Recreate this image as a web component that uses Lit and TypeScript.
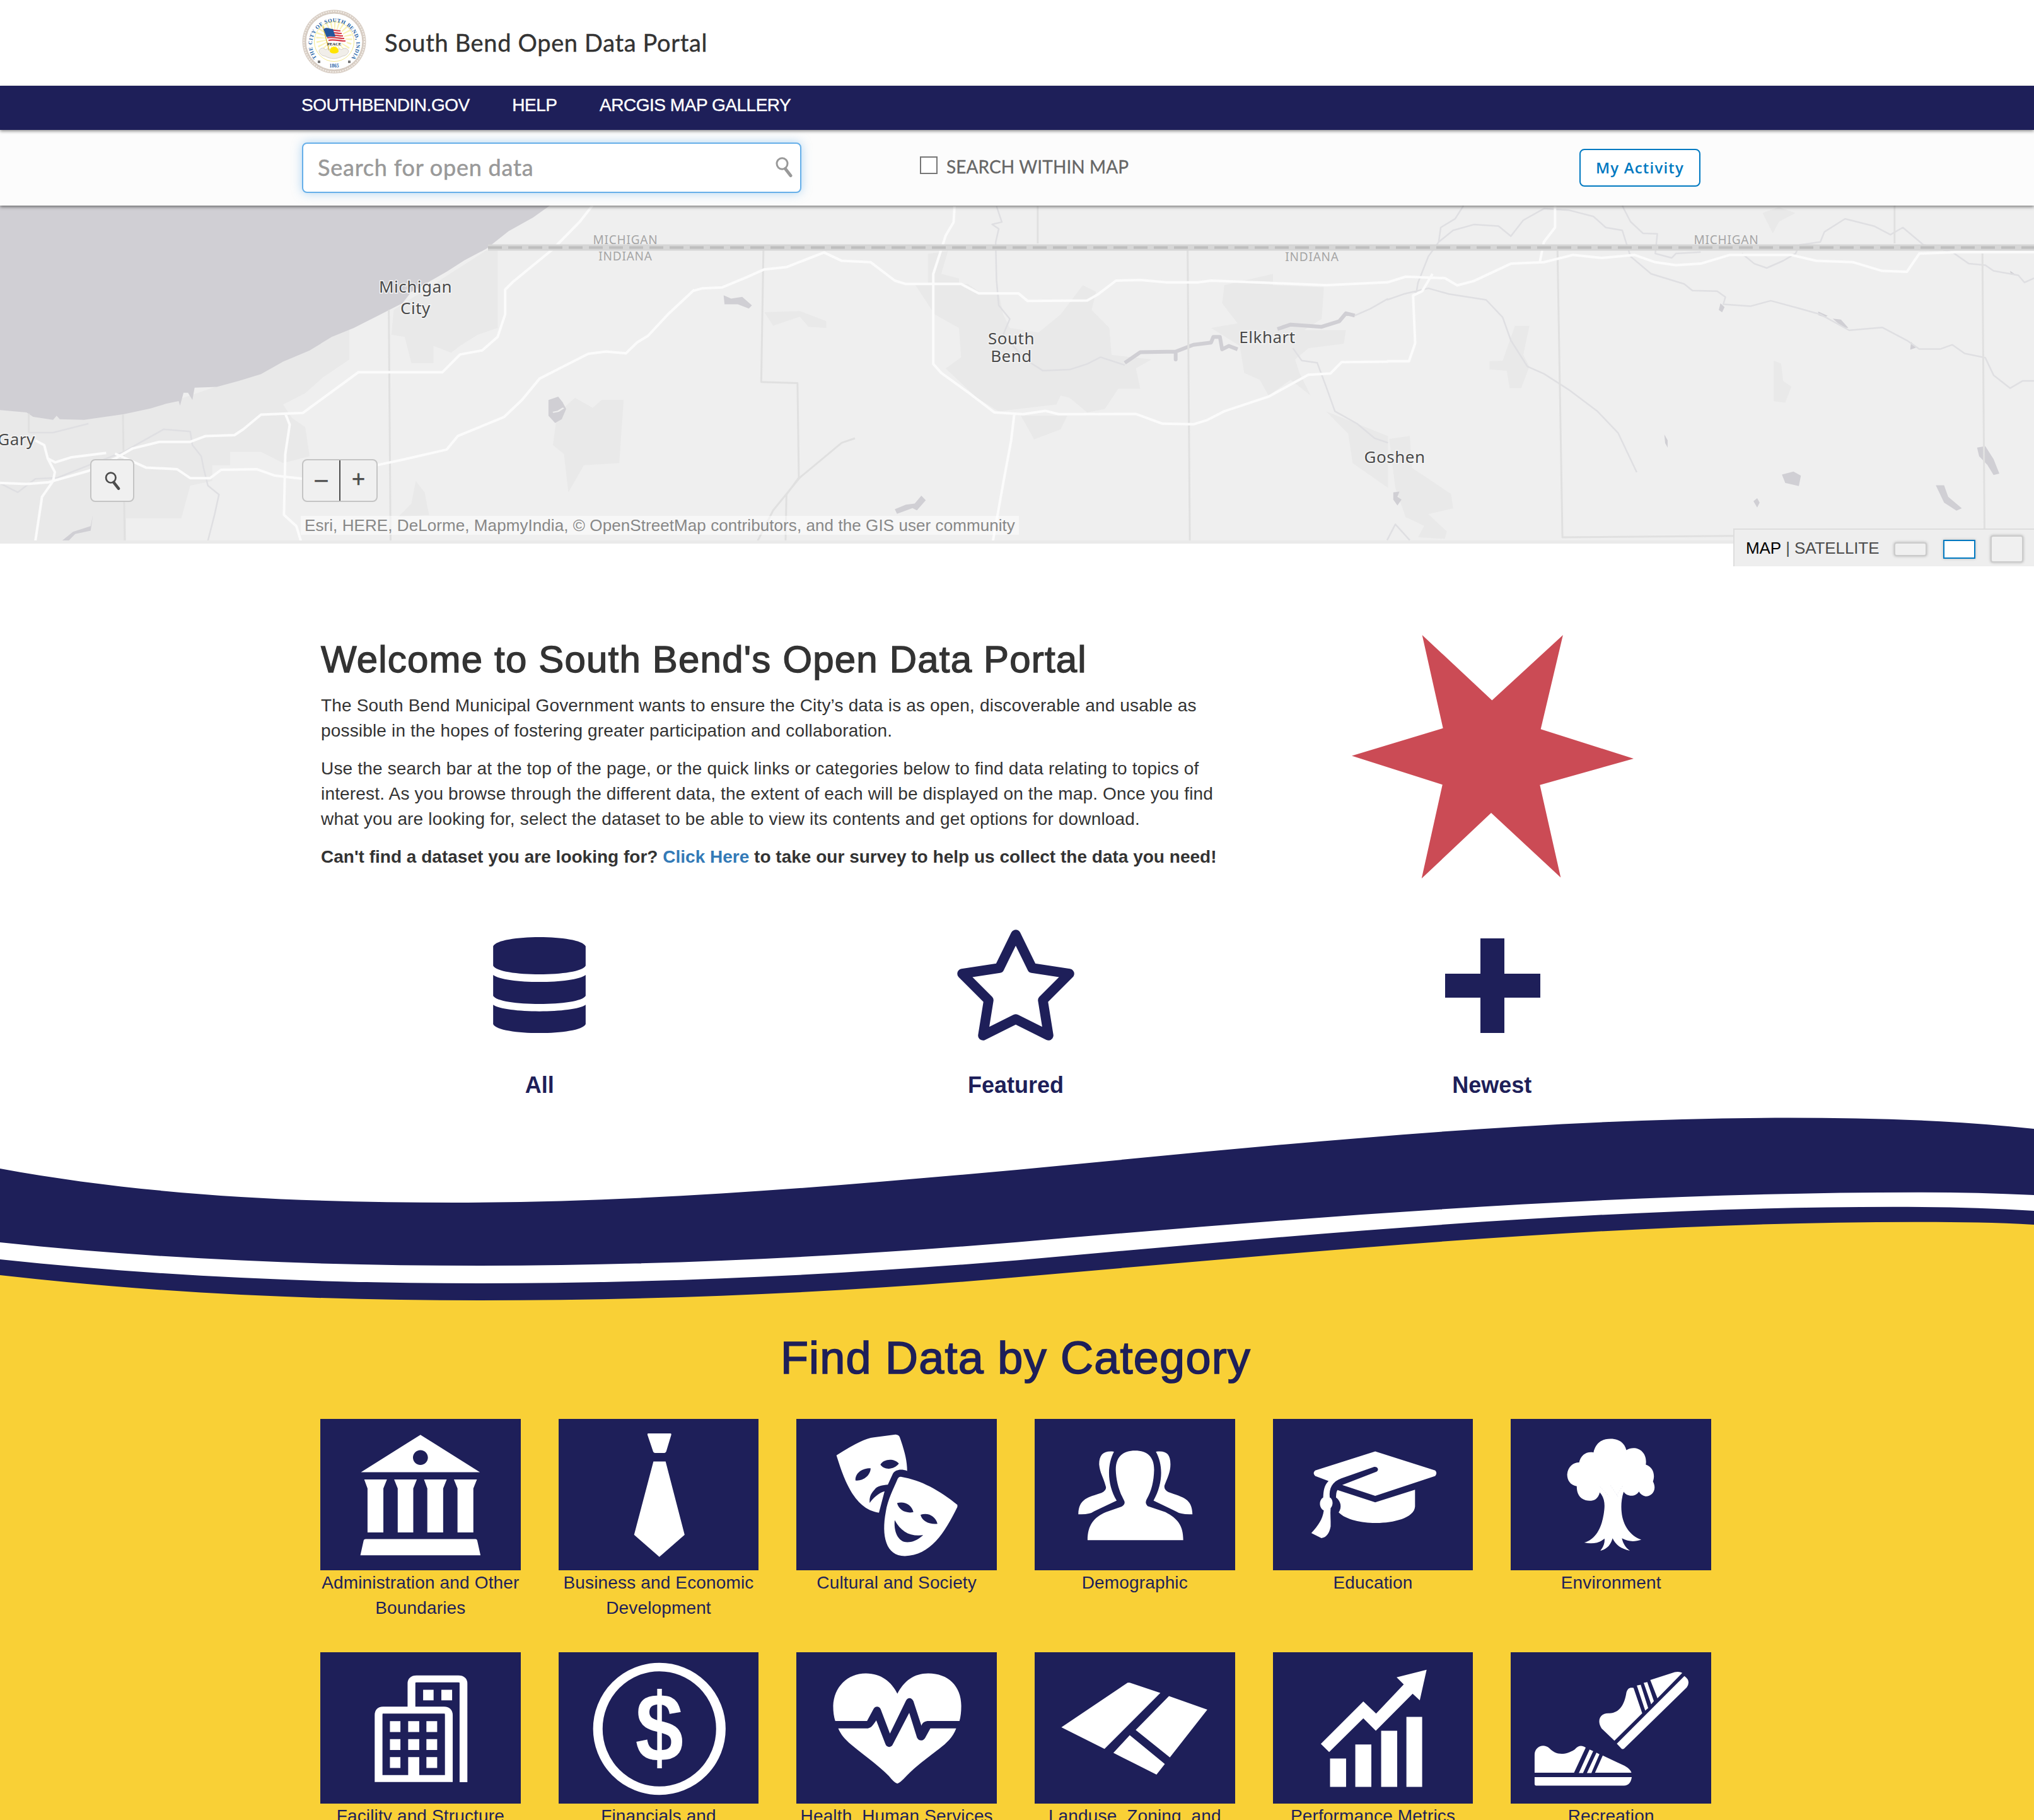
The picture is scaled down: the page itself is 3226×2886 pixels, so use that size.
import { LitElement, html, svg, css } from "lit";
import { customElement, property } from "lit/decorators.js";

const sealMark = html`<svg class="seal" viewBox="0 0 102 102">
  <circle cx="51" cy="51" r="50.5" fill="#d9cfc6"></circle>
  <circle cx="51" cy="51" r="48" fill="none" stroke="#f4efe9" stroke-width="2" stroke-dasharray="2 2"></circle>
  <circle cx="51" cy="51" r="45" fill="#fff" stroke="#cfc3b8" stroke-width="1"></circle>
  <circle cx="51" cy="51" r="31.500" fill="none" stroke="#f3e68c" stroke-width="1"></circle>
  <circle cx="51" cy="46" r="20" fill="none" stroke="#faf2b4" stroke-width="17" stroke-dasharray="2 3.200"></circle>
  <path id="ring" d="M23.500 76.500A35 35 0 1 1 78.500 76.500" fill="none"></path>
  <text class="ringText"><textPath href="#ring" textLength="170">THE CITY OF SOUTH BEND, INDIANA</textPath></text>
  <path d="M27 65c3-5 8-5 10-1 5-3 9 0 13 0s9-3 13 0c3-4 9-3 11 2-1 5-6 8-10 8-8 5-20 5-27 0-5 0-10-4-10-9z" fill="#f1eee9" stroke="#d6d0c8"></path>
  <path d="M44 66a7 7 0 0 1 14 0c0 5-14 5-14 0z" fill="#ffe400"></path>
  <path d="M33 27l10 38" stroke="#d8b93c" stroke-width="1.200"></path>
  <path d="M34 31c6-4 12 1 19 0 5 1 7 0 9 2l10 22c-5-3-9 0-15-2-5-1-10-2-14-1z" fill="#fff"></path>
  <path d="M35 33c8-3 16 1 26 1M37 37c8-2 17 1 26 1M39 41c8-2 17 1 26 1M40 45c8-2 18 1 27 1M42 49c8-2 18 1 27 1" fill="none" stroke="#d8404a" stroke-width="2.200"></path>
  <path d="M34 31c6-4 10 0 15 0l4 12c-5 0-9-1-14 1z" fill="#24559b"></path>
  <text class="peace" x="51" y="57" text-anchor="middle">PEACE</text>
  <text class="year" x="51" y="91.500" text-anchor="middle">1865</text>
  <path d="M25 81h4v4h-4zM73 81h4v4h-4z" fill="#777"></path>
</svg>`;

const magnifier = (cls: string) => html`<svg class=${cls} viewBox="0 0 27 32">
  <ellipse cx="10.500" cy="10.500" rx="8.500" ry="8.800" fill="none" stroke="currentColor" stroke-width="3"></ellipse>
  <path d="M15.500 18.500l8.500 11" stroke="currentColor" stroke-width="5" stroke-linecap="round"></path>
</svg>`;

const mapCanvas = html`<svg class="mapCanvas" viewBox="0 326 3226 536" preserveAspectRatio="none">
  <rect x="0" y="326" width="3226" height="536" fill="#efefef"></rect>
  <g transform="translate(0 320) scale(.70153 .35714)">
    <path class="urban" d="M0 925L300 930 400 880 490 820 580 770 790 560V700L730 780 690 850 640 900 660 960 690 1000 700 1130 640 1160 590 1110H520V1170H480V1240L430 1260 410 1405H285V1505H0zM890 480L1100 215H1125V560L1080 590 1040 640 1020 670 980 640V716H930L915 600 885 590zM1260 940L1300 870 1340 915 1360 880 1410 880 1400 1160 1320 1170 1285 1290 1275 1120 1250 1080zM940 1240L960 1290 970 1390 900 1400 930 1340z"></path>
    <path class="water" d="M0 0H1255L1205 70 1150 130 1100 208 1050 260 1010 310 930 400 910 450 850 510 800 560 750 600 700 660 640 710 590 765 540 795 490 822 440 825 435 880 425 848H415L407 905 404 885 375 897 340 918 280 943 190 968 135 965 128 950 120 968 75 955 60 935 0 925zM1240 880L1262 865 1272 890 1280 920 1270 965 1255 982 1240 950zM140 1505L165 1465 205 1440 210 1390 205 1460 170 1475 155 1505z"></path>
    <path class="river" d="M0 1250L40 1290 80 1230 130 1225 200 1170 280 1110 370 1010 430 1020 435 1080 455 1130 460 1180 470 1260 495 1300 485 1390 470 1505M65 1025L120 1025 200 985"></path>
    <path class="county" d="M65 940V1025M278 945L282 1505M879 480L883 1505"></path>
    <path class="road" d="M0 1248L60 1253 110 1245 200 1195 260 1140 300 1095 360 1066H430L465 1040 530 1036 550 1010 590 945 685 937 810 757H1000L1040 678 1090 660 1125 600 1142 500V390L1160 355 1250 210 1310 90 1340 15M80 1060L100 1080 108 1140 125 1157 160 1135 240 1115M108 1140L124 1200 120 1240 95 1310 80 1505M260 1118L330 1180 400 1187 430 1227H475L500 1190 580 1187 620 1215 685 1230M645 940L655 990 645 1120 642 1390 670 1440 680 1505M850 1170L910 1145 1010 1100 1035 1040 1140 955 1180 880 1220 785 1260 745 1330 675 1370 665 1415 673 1440 625 1465 595 1510 500 1570 390"></path>
    <path d="M1250 935L1262 930 1274 915" fill="none" stroke="#efefef" stroke-width="5"></path>
  </g>
  <g transform="translate(1100 320) scale(.70153 .35714)">
    <path class="urban" d="M500 365L620 365 650 405H690L700 500 715 560 780 580 830 500 880 370 910 400 900 480 940 560 945 680 1035 700 1000 740 1010 830 960 830 930 920 890 935 850 870 830 860 820 900 690 930 640 870 570 740 605 690 600 560 545 500zM530 230L575 220 560 320 600 340V365H530zM740 950H845L830 1010 770 1055zM1200 370L1310 320 1310 370 1425 380 1420 520 1380 570 1475 570 1470 630 1390 650 1360 700 1370 760 1395 860 1350 790 1300 860 1280 790 1245 760 1235 640 1170 560 1230 540 1195 450zM160 490L240 485 300 530V560L260 555 240 510 180 550zM1430 930L1570 1040V1270L1490 1160 1480 1030z"></path>
    <path class="water" d="M68 415L85 430 110 422 132 460 125 474 100 455 70 455zM455 1365L480 1345 500 1340 515 1305 525 1325 505 1370 495 1360 460 1385z"></path>
    <path class="bigRiver" d="M975 715L1010 668 1090 665V700V665L1130 635 1170 625 1175 600 1190 600 1195 655 1210 640 1230 655M1320 565L1350 545 1420 555 1460 530 1475 495 1495 505"></path>
    <path class="river" d="M685 20L697 90 675 100 690 120 683 180 685 350 690 460 715 520 700 590 750 700 790 750 850 745 890 720 920 690 975 725M1495 505L1530 475 1570 430M1355 650L1375 705 1410 715 1430 820 1450 930 1500 985 1540 1050 1570 1070"></path>
    <path class="county" d="M778 20V185M158 210L153 800 235 805 238 1225 210 1300 208 1505M1117 210L1122 1505M365 1050L335 1070 240 1225 180 1370 145 1505"></path>
    <path class="road" d="M0 395L20 384 65 380 120 335 160 300 210 290 295 225 335 262 400 268 455 350 480 365 605 365 645 407H735L755 440 890 438 915 410 955 350 1010 347 1070 358H1140L1170 350 1300 360 1430 370 1570 357M590 20L588 90 570 150 557 230 542 320V720L560 760 620 845 680 935 745 943 795 928 825 943 1000 942 1060 985 1130 988 1160 970 1200 930 1300 865 1390 768 1440 762 1465 712 1570 710M725 945L718 1060 700 1250 677 1505"></path>
  </g>
  <g transform="translate(2200 200) scale(.65434 .45918)">
    <path class="urban" d="M310 690H345L330 790 345 830 325 905H297L290 845 248 840V812L280 810zM937 810L955 820 960 880 980 900 965 955 937 950zM910 300L950 280 990 300 950 330 935 370zM5 1080L55 1070 60 1180 155 1270 160 1320 100 1340 145 1400 140 1425 75 1420 90 1380 45 1350 20 1250z"></path>
    <path class="water" d="M808 612L818 625 812 643 804 635zM672 1065L680 1085V1110L674 1095zM957 1203L985 1193 1003 1207 998 1243 965 1232zM888 1295L897 1285 903 1300 897 1317zM1330 1240L1350 1240 1360 1280 1393 1320 1380 1328 1350 1300zM1430 1110L1450 1105 1470 1150 1484 1200 1470 1205 1455 1170 1435 1140zM1045 640L1068 655 1060 660 1045 652zM1080 665L1100 668 1118 697 1105 695zM1270 745L1282 765 1268 772zM1510 500L1526 515 1512 513zM15 1265L30 1262 25 1280 35 1290 25 1310 15 1290z"></path>
    <path class="river" d="M185 275L165 320 130 350 125 400 100 450 75 540 70 580M125 400L160 360 210 340 270 345 300 380 330 325 380 285 440 290 500 312 530 350 570 360 590 450 640 510 720 545 740 568 800 570 820 590 815 615 880 622 930 603 1000 630 1050 650 1120 705 1200 695 1260 740 1290 770 1340 770 1370 755 1400 785 1450 800 1470 860 1510 905 1540 880H1568M570 275L590 330 620 370 655 372 650 440 690 455 700 440 760 435M860 440L890 475 920 490 960 465 990 440 1000 410 1050 400 1060 365 1110 320 1180 345 1220 375 1250 350 1300 410 1370 435 1410 475 1450 480 1470 500 1530 515 1545 540 1568 525M0 600L40 580 100 560 150 580 240 600 280 660 300 740 340 830 380 855 440 910 510 985 560 1060 605 1195M0 1430L20 1375 55 1430"></path>
    <path class="county" d="M413 430L425 1420 840 1415M1230 275V405M1443 440L1448 1390"></path>
    <path class="road" d="M407 275V350L380 400 370 470M0 540L45 520 140 525 170 550 210 535 300 475 380 470 450 445 520 455 600 445 650 470 700 480 760 475 830 445H980L1040 465 1130 470 1200 500 1260 503 1290 440 1380 435H1568M110 510L85 570 63 585 68 750 53 812H0"></path>
  </g>
  <path d="M774 392.500H3226" stroke="#d6d6d6" stroke-width="10"></path>
  <path d="M774 392.500H3226" stroke="#bebebe" stroke-width="4" stroke-dasharray="22 10"></path>
  <g class="stateName"><text x="992" y="387">MICHIGAN</text><text x="992" y="413">INDIANA</text><text x="2081" y="414">INDIANA</text><text x="2738" y="387">MICHIGAN</text></g>
  <g class="cityName"><text x="659" y="464">Michigan</text><text x="659" y="498">City</text><text x="1604" y="546">South</text><text x="1604" y="574">Bend</text><text x="2010" y="544">Elkhart</text><text x="2212" y="734">Goshen</text><text x="26" y="706">Gary</text></g>
  <rect x="0" y="857" width="3226" height="5" fill="#eaeaea"></rect>
</svg>`;

const icons = {
  admin: { box: "40 48 670 573", art: svg`<path fill-rule="evenodd" d="M375 108L574 250H176zM375 166c-14 0-25 13-25 28s11 28 25 28 25-13 25-28-11-28-25-28z"></path><path d="M187 277h76l-12 34v167h-53V311zM287 277h76l-12 34v167h-52V311zM387 277h76l-12 34v167h-53V311zM487 277h77l-12 34v167h-53V311zM192 503h367q5 0 6 5l11 56H174l11-56q1-5 7-5z"></path>` },
  business: { box: "837 48 674 573", art: svg`<path d="M1139 103h74q4 0 3 5l-16 60q-2 9-8 9h-30q-6 0-8-9l-18-60q-1-5 3-5zM1156 209h41l64 278-85 83-85-83z"></path>` },
  culture: { box: "49 48 674 573", art: svg`<path fill-rule="evenodd" d="M184 186Q275 120 310 118L383 107Q394 108 397 117C412 165 422 205 422 245 402 236 382 240 374 255L357 297C340 299 320 302 312 316 300 330 294 345 296 366 306 350 325 328 346 322L327 403C240 390 205 260 184 186zM248 281c24 4 51-18 51-46-26-1-52 16-51 46zM332 221c13 22 46 20 62-4-17-22-52-17-62 4z"></path><path fill-rule="evenodd" d="M401 267C470 280 530 318 591 373V381C548 480 500 565 414 567 350 567 335 490 350 400 356 355 377 310 390 275Q394 266 401 267zM388 367c6 27 31 40 55 34-5-29-33-43-55-34zM467 411c5 26 33 38 57 34-7-29-31-44-57-34zM380 431c22 44 51 63 96 57-25 26-50 30-65 25-23-10-34-43-31-82z"></path>` },
  people: { box: "850 48 674 573", art: svg`<path d="M1028 507C1028 450 1050 420 1090 401L1143 380Q1157 370 1151 357C1133 320 1124 280 1123 240 1123 190 1148 168 1188 168S1252 190 1252 240C1251 285 1243 320 1228 350Q1219 366 1230 378L1290 401C1330 425 1350 450 1350 507z"></path><path d="M1117 172C1092 225 1095 300 1126 357L1050 398Q1035 411 997 409C998 350 1030 345 1075 328Q1094 318 1089 302C1080 265 1070 255 1067 220 1067 180 1085 167 1117 172zM1258 172C1284 225 1281 295 1250 357L1325 398Q1342 411 1381 409C1380 350 1350 345 1300 325Q1284 316 1287 300C1297 270 1307 250 1307 220 1307 180 1292 167 1258 172z"></path>` },
  education: { box: "40 48 674 573", art: svg`<path d="M384 171L586 243Q594 253 586 264L384 339 273 298 388 248C400 240 390 226 379 230L270 273C240 285 228 310 231 345 241 350 245 372 234 386 232 410 235 430 234 455 230 480 220 497 203 499L169 480C190 455 207 430 211 395 195 385 193 356 209 345 210 320 212 300 227 283L182 264Q172 253 182 243z"></path><path d="M257 317L384 364 518 316V380C515 425 440 443 384 442 340 442 285 430 261 402 272 385 270 360 252 345 253 335 252 325 257 317z"></path>` },
  tree: { box: "841 48 670 573", art: svg`<path d="M1118 175C1125 140 1145 123 1175 123S1222 140 1228 166C1260 145 1300 170 1293 221 1318 230 1325 260 1317 285 1333 320 1310 343 1292 341Q1278 338 1270 323C1258 345 1230 343 1219 324 1211 350 1210 380 1212 400 1216 450 1240 490 1278 505 1255 514 1235 513 1213 500 1217 520 1225 535 1240 547 1210 540 1192 525 1182 500 1175 525 1165 540 1141 547 1153 530 1156 515 1155 501 1135 520 1110 522 1087 516 1125 505 1145 460 1152 410 1157 375 1157 350 1139 326 1132 360 1108 360 1092 356 1070 348 1062 330 1062 303 1040 298 1030 280 1030 258 1032 230 1050 213 1070 213 1075 185 1095 170 1118 175z"></path><path d="M1140 305l30 35M1175 300l25 42M1215 303l-22 38" stroke="#dfe0ea" stroke-width="2" stroke-dasharray="3 6" fill="none"></path>` },
  facility: { box: "40 932 670 573", art: svg`<path d="M235 1410V1170Q235 1151 250 1151H454Q470 1151 470 1170V1410zM345 1151V1050Q345 1033 362 1033H502Q519 1033 519 1050V1424" fill="none" stroke="#fff" stroke-width="26"></path><path d="M384 1074h35v40h-35zM445 1074h36v40h-36zM273 1193h35v41h-35zM334 1193h37v41h-37zM395 1193h36v41h-36zM273 1261h35v41h-35zM334 1261h37v41h-37zM395 1261h36v41h-36zM273 1329h35v41h-35zM334 1329h37v80h-37zM395 1329h36v41h-36z"></path>` },
  finance: { box: "837 932 674 573", art: svg`<ellipse cx="1176" cy="1222" rx="207" ry="234" fill="none" stroke="#fff" stroke-width="32"></ellipse><text class="dollar" transform="translate(1176 1345) scale(1.92 2.42)" text-anchor="middle">$</text>` },
  health: { box: "49 932 674 573", art: svg`<path d="M389 1089C412 1040 445 1012 493 1012 560 1012 604 1060 604 1135Q604 1170 598 1192H490C478 1194 473 1200 470 1210L443 1117C437 1102 424 1102 418 1115L364 1240 333 1148C328 1135 315 1135 309 1146L287 1192H180Q173 1170 173 1135C175 1065 220 1012 283 1012 335 1012 370 1045 389 1089z"></path><path d="M190 1220H290C302 1218 307 1208 318 1190L349 1280C354 1294 369 1294 374 1280L429 1161 455 1255C461 1269 475 1269 482 1257L500 1220H587C575 1255 555 1275 530 1297 480 1340 450 1365 420 1400Q398 1427 389 1429 380 1428 360 1400C320 1355 280 1325 235 1283 210 1258 200 1245 190 1220z"></path>` },
  landuse: { box: "850 932 674 573", art: svg`<path d="M1163 1047h7l103 39-188 212-145-82zM1302 1098l129 51-126 181-115-104zM1170 1246l118 109-28 40-145-82z"></path>` },
  metrics: { box: "40 932 674 573", art: svg`<path d="M201 1279L344 1118 387 1164 480 1054 456 1027 557 998 534 1114 510 1089 386 1229 344 1182 229 1310zM232 1334h54v108h-54zM317 1281h54v161h-54zM404 1229h54v213h-54zM489 1177h53v265h-53z"></path>` },
  recreation: { box: "841 932 670 573", art: svg`<path d="M921 1388V1320C921 1290 950 1275 970 1295 990 1320 1020 1325 1055 1300 1070 1282 1080 1285 1092 1293L1053 1388zM1105 1300l12 6-34 83h-14zM1128 1312l10 6-27 71h-15zM1149 1323L1222 1362Q1242 1375 1245 1388H1123zM921 1405H1246Q1242 1437 1220 1437H926Q921 1437 921 1430zM1188 1267L1145 1220C1128 1190 1140 1160 1172 1163 1205 1162 1222 1130 1228 1085 1232 1068 1240 1064 1252 1067L1281 1163zM1263 1058l13-3 25 88-10 10zM1286 1048l12-3 22 72-9 12zM1308 1037L1390 1007Q1406 1004 1415 1010L1332 1106zM1196 1278L1422 1022Q1445 1040 1430 1065L1221 1296Q1217 1301 1212 1297z"></path>` },
} as const;

type IconName = keyof typeof icons;

@customElement("category-tile")
class CategoryTile extends LitElement {
  @property() icon: IconName = "admin";
  @property() label = "";

  static styles = css`
    :host { display: block; }
    .art { display: block; width: 100%; height: 240px; background: #1e1f59; fill: #fff; }
    .dollar { font: bold 152px "Liberation Sans", Arial, sans-serif; }
    .label { font-size: 28px; line-height: 40px; height: 80px; text-align: center; color: #1e1f59; white-space: pre-line; margin: 0 -10px; letter-spacing: 0.15px; }
  `;

  render() {
    const { box, art } = icons[this.icon];
    return html`<svg class="art" viewBox=${box} preserveAspectRatio="none">${art}</svg>
      <div class="label">${this.label}</div>`;
  }
}

const categories: [IconName, string][] = [
  ["admin", "Administration and Other\nBoundaries"],
  ["business", "Business and Economic\nDevelopment"],
  ["culture", "Cultural and Society"],
  ["people", "Demographic"],
  ["education", "Education"],
  ["tree", "Environment"],
  ["facility", "Facility and Structure"],
  ["finance", "Financials and"],
  ["health", "Health, Human Services"],
  ["landuse", "Landuse, Zoning, and"],
  ["metrics", "Performance Metrics"],
  ["recreation", "Recreation"],
];

@customElement("app-root")
class AppRoot extends LitElement {
  static styles = css`
    :host { display: block; width: 3226px; height: 2886px; overflow: hidden; background: #fff; color: #333; font-family: "Liberation Sans", Arial, sans-serif; font-size: 28px; }
    * { box-sizing: border-box; }
    .brand { height: 136px; display: flex; align-items: center; padding: 0 0 4px 479px; gap: 29px; }
    .seal { width: 102px; height: 102px; }
    .ringText { font: bold 8.500px "Liberation Serif", serif; fill: #1d5fa5; }
    .peace { font: bold 6.500px "Liberation Serif", serif; fill: #222; }
    .year { font: bold 7.500px "Liberation Serif", serif; fill: #1d5fa5; }
    .title { font: 38px/50px Lato, sans-serif; letter-spacing: .65px; padding-top: 2px; -webkit-text-stroke: .4px #333; }
    .nav { height: 70px; background: #1e1f59; color: #fff; display: flex; padding: 0 0 9px 478px; gap: 67.500px; align-items: center; position: relative; z-index: 2; box-shadow: 0 2px 5px rgba(0,0,0,.45); letter-spacing: -.47px; -webkit-text-stroke: .4px #fff; }
    .searchBar { height: 120px; background: #fcfcfc; display: flex; align-items: center; padding: 0 529px 1px 479px; position: relative; z-index: 1; box-shadow: 0 2px 5px rgba(0,0,0,.5); }
    .searchBox { width: 792px; height: 80px; border: 2px solid #66afe9; border-radius: 8px; background: #fff; box-shadow: 0 0 16px rgba(102,175,233,.5); display: flex; align-items: center; justify-content: space-between; padding: 0 12px 2px 23px; color: #999; font: 36px/50px Lato, sans-serif; letter-spacing: .78px; -webkit-text-stroke: .5px #999; }
    .searchGlyph { width: 27px; height: 32px; }
    .check { width: 28px; height: 28px; border: 2px solid #767676; background: #fff; margin: 0 14px 7px 188px; }
    .within { font: 28px/40px Lato, sans-serif; color: #666; letter-spacing: .1px; padding-bottom: 4px; -webkit-text-stroke: .3px #666; }
    .activity { margin-left: auto; width: 192px; height: 60px; border: 2px solid #0079c1; border-radius: 8px; background: #fff; color: #0079c1; font: 600 24px/56px "Open Sans", sans-serif; letter-spacing: 1.200px; text-align: center; }
    .map { height: 536px; position: relative; }
    .mapCanvas { display: block; width: 3226px; height: 536px; }
    .urban { fill: #e9e9e9; }
    .water { fill: #d0cfd4; }
    .river, .county, .road, .bigRiver { fill: none; vector-effect: non-scaling-stroke; stroke-linejoin: round; }
    .river { stroke: #dfdfe2; stroke-width: 2.500px; }
    .bigRiver { stroke: #d0cfd4; stroke-width: 6px; }
    .county { stroke: #e0e0e0; stroke-width: 3px; }
    .road { stroke: #fbfbfb; stroke-width: 4px; }
    .stateName { font: 19px "Noto Sans", sans-serif; fill: #a5a5a5; text-anchor: middle; letter-spacing: .8px; }
    .cityName { font: 26px "Noto Sans", sans-serif; fill: #4a4a4a; text-anchor: middle; letter-spacing: .5px; stroke: #f4f4f4; stroke-width: 3px; paint-order: stroke; }
    .mapSearch, .zoom { position: absolute; top: 402px; height: 68px; border: 2px solid #c4c4c4; border-radius: 8px; background: #f0f0f0; color: #4c4c4c; display: flex; align-items: center; justify-content: center; }
    .mapSearch { left: 143px; width: 70px; }
    .mapGlyph { width: 25px; height: 29px; }
    .zoom { left: 479px; width: 120px; }
    .zoomBtn { flex: 1; height: 64px; font: 36px/60px "Liberation Sans", sans-serif; text-align: center; -webkit-text-stroke: .6px #4c4c4c; }
    .zoomBtn + .zoomBtn { border-left: 2px solid #4c4c4c; }
    .credit { position: absolute; left: 477px; top: 492px; height: 30px; line-height: 30px; padding: 0 6px; background: rgba(255,255,255,.5); color: #888; font-size: 26px; letter-spacing: .075px; white-space: nowrap; }
    .layers { position: absolute; left: 2749px; top: 512px; width: 477px; height: 60px; background: #eee; border: 2px solid #ddd; border-width: 2px 0 0 2px; display: flex; align-items: center; padding-left: 18px; font-size: 26px; white-space: pre; color: #4c4c4c; letter-spacing: -.1px; }
    .on { color: #000; }
    .size { border: 2px solid #ccc; border-radius: 4px; box-shadow: 0 0 4px rgba(0,0,0,.25); background: #f0f0f0; margin-top: 3px; }
    .small { width: 52px; height: 22px; margin-left: 24px; }
    .medium { width: 51px; height: 30px; margin-left: 26px; border-color: #0079c1; border-radius: 0; background: #fff; }
    .large { width: 52px; height: 43px; margin-left: 24px; }
    .intro { height: 611px; padding: 151px 0 0 509px; display: flex; }
    .copy { width: 1635px; white-space: nowrap; }
    h1 { margin: 0 0 20px; font-size: 60px; line-height: 66px; font-weight: 400; letter-spacing: 1.180px; -webkit-text-stroke: 1.400px #333; }
    p { margin: 0 0 20px; line-height: 40px; letter-spacing: .17px; }
    .survey { letter-spacing: .01px; }
    .link { color: #337ab7; }
    .redStar { width: 447px; height: 386px; margin-top: -6px; fill: #cb4b55; }
    .quick { height: 267px; padding: 0 482px 0 478px; display: grid; grid-template-columns: repeat(3, 1fr); text-align: center; color: #1e1f59; font: bold 36px/38px "Liberation Sans", sans-serif; }
    .quickIcon { display: block; width: 186px; height: 178px; margin: 0 auto 51px; fill: #1e1f59; }
    .wave { display: block; width: 3226px; height: 330px; }
    .catalog { background: #f9d036; height: 816px; padding: 43px 512px 0 508px; }
    h2 { margin: 0 0 57px; text-align: center; font-size: 72px; line-height: 80px; font-weight: 400; color: #1e1f59; letter-spacing: 1.230px; -webkit-text-stroke: 1.700px #1e1f59; }
    .grid { display: grid; grid-template-columns: repeat(6, 1fr); gap: 50px 60px; }
  `;

  render() {
    return html`
      <div class="brand">${sealMark}<span class="title">South Bend Open Data Portal</span></div>
      <div class="nav"><span>SOUTHBENDIN.GOV</span><span>HELP</span><span>ARCGIS MAP GALLERY</span></div>
      <div class="searchBar">
        <div class="searchBox"><span>Search for open data</span>${magnifier("searchGlyph")}</div>
        <span class="check"></span><span class="within">SEARCH WITHIN MAP</span>
        <div class="activity">My Activity</div>
      </div>
      <div class="map">
        ${mapCanvas}
        <div class="mapSearch">${magnifier("mapGlyph")}</div>
        <div class="zoom"><span class="zoomBtn">–</span><span class="zoomBtn">+</span></div>
        <div class="credit">Esri, HERE, DeLorme, MapmyIndia, © OpenStreetMap contributors, and the GIS user community</div>
        <div class="layers"><span class="on">MAP</span> | SATELLITE<span class="size small"></span><span class="size medium"></span><span class="size large"></span></div>
      </div>
      <div class="intro">
        <div class="copy">
          <h1>Welcome to South Bend's Open Data Portal</h1>
          <p>The South Bend Municipal Government wants to ensure the City’s data is as open, discoverable and usable as<br>possible in the hopes of fostering greater participation and collaboration.</p>
          <p>Use the search bar at the top of the page, or the quick links or categories below to find data relating to topics of<br>interest. As you browse through the different data, the extent of each will be displayed on the map. Once you find<br>what you are looking for, select the dataset to be able to view its contents and get options for download.</p>
          <p class="survey"><b>Can't find a dataset you are looking for? <span class="link">Click Here</span> to take our survey to help us collect the data you need!</b></p>
        </div>
        <svg class="redStar" viewBox="98 56 1001 776" preserveAspectRatio="none"><path d="M348 56L596 264 848 56 769 356 1099 450 766 534 840 829 593 623 346 832 420 533 98 441 422 353z"></path></svg>
      </div>
      <div class="quick">
        <div><svg class="quickIcon" viewBox="296 966 194 349" preserveAspectRatio="none"><path d="M316 1020C325 982 460 982 469 1020V1080C460 1116 325 1116 316 1080zM316 1109C335 1138 450 1138 469 1109V1174C460 1208 325 1208 316 1174zM316 1202C335 1229 450 1229 469 1202V1262C460 1299 325 1299 316 1262z"></path></svg>All</div>
        <div><svg class="quickIcon" viewBox="0 0 186 178"><path d="M93 9L119 62 178 71 136 113 145 169 93 143 41 169 50 113 8 71 67 62z" fill="none" stroke="#1e1f59" stroke-width="15.500" stroke-linejoin="round"></path></svg>Featured</div>
        <div><svg class="quickIcon" viewBox="0 0 186 178"><path d="M75 15h38v56h57v38h-57v56H75v-56H19V71h56z"></path></svg>Newest</div>
      </div>
      <svg class="wave" viewBox="0 1740 3226 330">
        <path fill="#1e1f59" d="M0 1853C240 1897 480 1907 720 1907 1018 1907 1315 1882 1613 1855 2021 1816 2429 1772.500 2837 1772.500 2967 1772.500 3096 1776 3226 1790V2070H0z"></path>
        <path fill="#fff" d="M0 1970C254 1997 508 2007 761 2007 1045 2007 1329 1993 1613 1969.700 2090 1929 2566 1890.700 3043 1890.700 3104 1890.700 3165 1892 3226 1895V1920C3151 1915 3076 1913.700 3002 1913.700 2539 1913.700 2076 1957 1613 1998.500 1329 2022 1045 2035 761 2035 508 2035 254 2024 0 1997z"></path>
        <path fill="#f9d036" d="M0 2022C254 2051 508 2062 761 2062 1045 2062 1329 2050 1613 2025.300 2088 1984 2563 1937.700 3038 1937.700 3101 1937.700 3163 1938 3226 1942V2070H0z"></path>
      </svg>
      <div class="catalog">
        <h2>Find Data by Category</h2>
        <div class="grid">${categories.map(([icon, label]) => html`<category-tile .icon=${icon} .label=${label}></category-tile>`)}</div>
      </div>
    `;
  }
}
